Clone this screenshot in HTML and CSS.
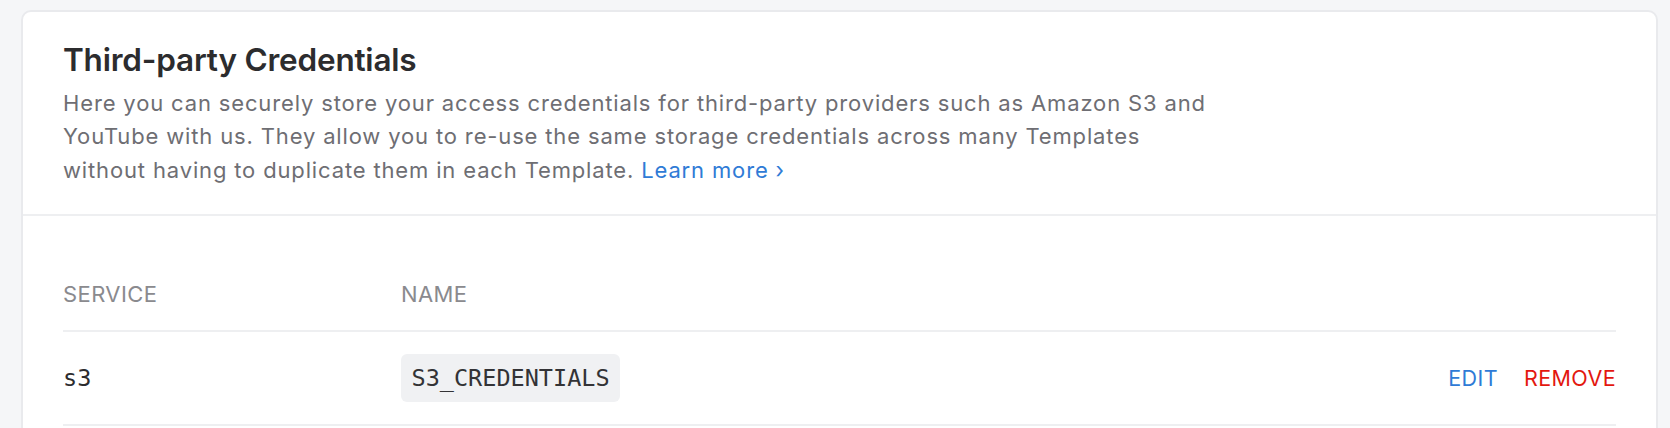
FILE: index.html
```html
<!DOCTYPE html>
<html lang="en">
<head>
<meta charset="utf-8">
<title>Third-party Credentials</title>
<link rel="stylesheet" href="styles.css">
</head>
<body>
  <section class="card">
    <header class="card-head">
      <h1 class="title">Third-party Credentials</h1>
      <p class="desc">Here you can securely store your access credentials for third-party providers such as Amazon S3 and YouTube with us. They allow you to re-use the same storage credentials across many Templates without having to duplicate them in each Template. <a class="link" href="#">Learn more ›</a></p>
    </header>
    <div class="card-body">
      <table class="creds">
        <thead>
          <tr>
            <th class="col-service">Service</th>
            <th class="col-name">Name</th>
            <th class="col-actions"></th>
          </tr>
        </thead>
        <tbody>
          <tr>
            <td class="service">s3</td>
            <td><code class="badge">S3_CREDENTIALS</code></td>
            <td class="actions"><a class="act edit" href="#">EDIT</a><a class="act remove" href="#">REMOVE</a></td>
          </tr>
        </tbody>
      </table>
    </div>
  </section>
</body>
</html>
```

FILE: styles.css
```css
html, body {
  margin: 0;
  padding: 0;
}
body {
  background: #f5f6f8;
  padding: 10px 12px 0 21px;
  font-family: Inter, "Noto Sans", sans-serif;
  color: #2c2c2e;
}
.card {
  background: #ffffff;
  border: 2px solid #e9eaed;
  border-radius: 10px;
  min-height: 460px;
  box-sizing: border-box;
}
.card-head {
  padding: 28px 40px 27px 40px;
  border-bottom: 2px solid #eeeff1;
}
.title {
  margin: 0;
  font-size: 31.5px;
  line-height: 40px;
  font-weight: 600;
  color: #2c2c2e;
  letter-spacing: -0.2px;
}
.desc {
  margin: 7px 0 0 0;
  max-width: 1162px;
  font-size: 22px;
  line-height: 33.3px;
  letter-spacing: 0.85px;
  color: #6e6e73;
}
.link {
  color: #2f7bd6;
  text-decoration: none;
}
.card-body {
  padding: 48px 40px 0 40px;
}
.creds {
  width: 100%;
  border-collapse: collapse;
}
.creds th {
  text-align: left;
  font-weight: 400;
  font-size: 22px;
  line-height: 33px;
  letter-spacing: 0.4px;
  color: #8a8a8e;
  text-transform: uppercase;
  padding: 14px 0 19px 0;
  border-bottom: 2px solid #eeeff1;
}
.col-service {
  width: 338px;
}
.creds td {
  padding: 22px 0;
  vertical-align: middle;
  border-bottom: 2px solid #eeeff1;
}
.service {
  font-family: "DejaVu Sans Mono", "Liberation Mono", monospace;
  font-size: 23.5px;
  color: #2c2c2e;
}
.badge {
  display: inline-block;
  font-family: "DejaVu Sans Mono", "Liberation Mono", monospace;
  font-size: 23.5px;
  line-height: 48px;
  padding: 0 10.5px;
  background: #f0f1f3;
  border-radius: 6px;
  color: #333336;
}
.actions {
  text-align: right;
  white-space: nowrap;
}
.act {
  font-size: 21.5px;
  text-decoration: none;
  letter-spacing: 0.4px;
}
.edit {
  color: #2f7bd6;
  margin-right: 26px;
}
.remove {
  color: #e3170f;
}
```
